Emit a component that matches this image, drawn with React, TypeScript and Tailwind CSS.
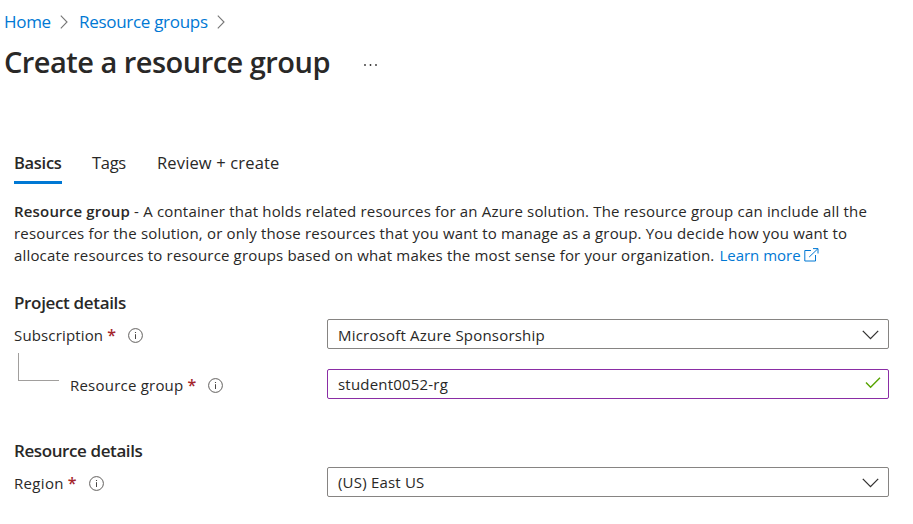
import type { ReactNode } from "react";

function Crumb({ children, className }: { children: ReactNode; className: string }) {
  return (
    <a className={`whitespace-nowrap text-[17px] text-[#0078d4] ${className}`}>{children}</a>
  );
}

function CrumbArrow() {
  return (
    <svg width="8" height="14" viewBox="0 0 8 14" fill="none" stroke="#767676" strokeWidth="1.1" className="shrink-0">
      <path d="M.8 .7 7 7 .8 13.3" />
    </svg>
  );
}

function InfoIcon() {
  return (
    <svg width="15" height="15" viewBox="0 0 15 15" fill="none" className="shrink-0">
      <circle cx="7.5" cy="7.5" r="6.9" stroke="#605e5c" strokeWidth="1" />
      <path d="M7.5 6.2V11" stroke="#484644" strokeWidth="1" />
      <path d="M7.5 4V5" stroke="#484644" strokeWidth="1.1" />
    </svg>
  );
}

function Chevron() {
  return (
    <svg width="17" height="10" viewBox="0 0 17 10" fill="none" stroke="#323130" strokeWidth="1.3" className="shrink-0">
      <path d="M.8 .9 8.5 8.6 16.2 .9" />
    </svg>
  );
}

function Label({ children, className }: { children: ReactNode; className: string }) {
  return (
    <div className="flex h-8 items-center whitespace-nowrap">
      <span className={className}>{children}</span>
      <span className="ml-[4px] text-[16px] font-semibold text-[#a4262c]">*</span>
      <span className="ml-3"><InfoIcon /></span>
    </div>
  );
}

function Field({ children, icon, className }: { children: ReactNode; icon: ReactNode; className: string }) {
  return (
    <div className={`flex h-[30px] w-[562px] shrink-0 items-center justify-between rounded-[2px] border pl-[10px] tracking-[0.2px] ${className}`}>
      {children}
      {icon}
    </div>
  );
}

export default function App() {
  return (
    <main className="h-[524px] w-[913px] overflow-hidden bg-white font-['Open_Sans','Noto_Sans',sans-serif] text-[15px] text-[#292827]">
      <nav className="flex h-11 items-center pl-1">
        <Crumb className="w-[47px] tracking-[-0.3px]">Home</Crumb>
        <span className="ml-[9px]"><CrumbArrow /></span>
        <Crumb className="ml-[11px] w-[130px] tracking-[-0.3px]">Resource groups</Crumb>
        <span className="ml-[8px]"><CrumbArrow /></span>
      </nav>
      <header className="flex h-[38px] items-center pl-1">
        <h1 className="w-[359px] whitespace-nowrap pb-[2px] text-[29px] font-semibold tracking-[-0.52px]">Create a resource group</h1>
        <svg width="16" height="4" viewBox="0 0 16 4" fill="#323130" className="mt-[3px]">
          <circle cx="2" cy="2" r=".9" />
          <circle cx="7.5" cy="2" r=".9" />
          <circle cx="13" cy="2" r=".9" />
        </svg>
      </header>
      <div className="mt-[62px] flex h-10 gap-[30px] whitespace-nowrap pl-[14px] text-[16.5px]">
        <div className="h-10 w-12 border-b-[3px] border-[#0078d4] pt-[7px] font-semibold tracking-[-0.3px]">Basics</div>
        <div className="w-[35px] pt-[7px] tracking-[-0.3px]">Tags</div>
        <div className="pt-[7px] tracking-[0.15px]">Review + create</div>
      </div>
      <p className="mt-4 whitespace-nowrap pl-[14px] leading-[22px] tracking-[0.18px]">
        <span className="block"><b className="font-semibold">Resource group</b> - A container that holds related resources for an Azure solution. The resource group can include all the</span>
        <span className="block">resources for the solution, or only those resources that you want to manage as a group. You decide how you want to</span>
        <span className="flex items-center">
          <span className="tracking-[0.16px]">allocate resources to resource groups based on what makes the most sense for your organization.</span>
          <a className="ml-[5px] tracking-normal text-[#0078d4]">Learn more</a>
          <svg width="15" height="14" viewBox="0 0 15 14" fill="none" stroke="#0078d4" strokeWidth="1" className="ml-[3px]">
            <path d="M7 2.5H.8V13H11.5V7M9 .6H14V5.5M13.8 .8 5.2 9" />
          </svg>
        </span>
      </p>
      <h2 className="mt-[25px] h-7 pl-[14px] text-[17px] font-semibold leading-6 tracking-[-0.34px]">Project details</h2>
      <section>
        <div className="flex h-[30px] pl-[14px]">
          <div className="w-[313px]"><Label className="tracking-[0.15px]">Subscription</Label></div>
          <Field className="border-[#868482] pt-[2px]" icon={<span className="mr-[9px]"><Chevron /></span>}>Microsoft Azure Sponsorship</Field>
        </div>
        <div className="mt-5 flex h-[30px] pl-[18px]">
          <div className="-mt-4 mr-[11px] h-7 w-[41px] border-b border-l border-[#a19f9d]" />
          <div className="w-[257px]"><Label className="tracking-[0.22px]">Resource group</Label></div>
          <Field
            className="border-[#8a2da5]"
            icon={
              <svg width="16" height="12" viewBox="0 0 16 12" fill="none" stroke="#57a300" strokeWidth="1.4" className="-mt-0.5 mr-[7px]">
                <path d="M1 5.5 5.6 10.2 15 .8" />
              </svg>
            }
          >student0052-rg</Field>
        </div>
      </section>
      <h2 className="mt-10 h-7 pl-[14px] text-[17px] font-semibold leading-6 tracking-[-0.4px]">Resource details</h2>
      <div className="flex pl-[14px]">
        <div className="w-[313px]"><Label className="tracking-[0.32px]">Region</Label></div>
        <Field className="border-[#868482]" icon={<span className="mr-[9px] pt-px"><Chevron /></span>}>(US) East US</Field>
      </div>
    </main>
  );
}
